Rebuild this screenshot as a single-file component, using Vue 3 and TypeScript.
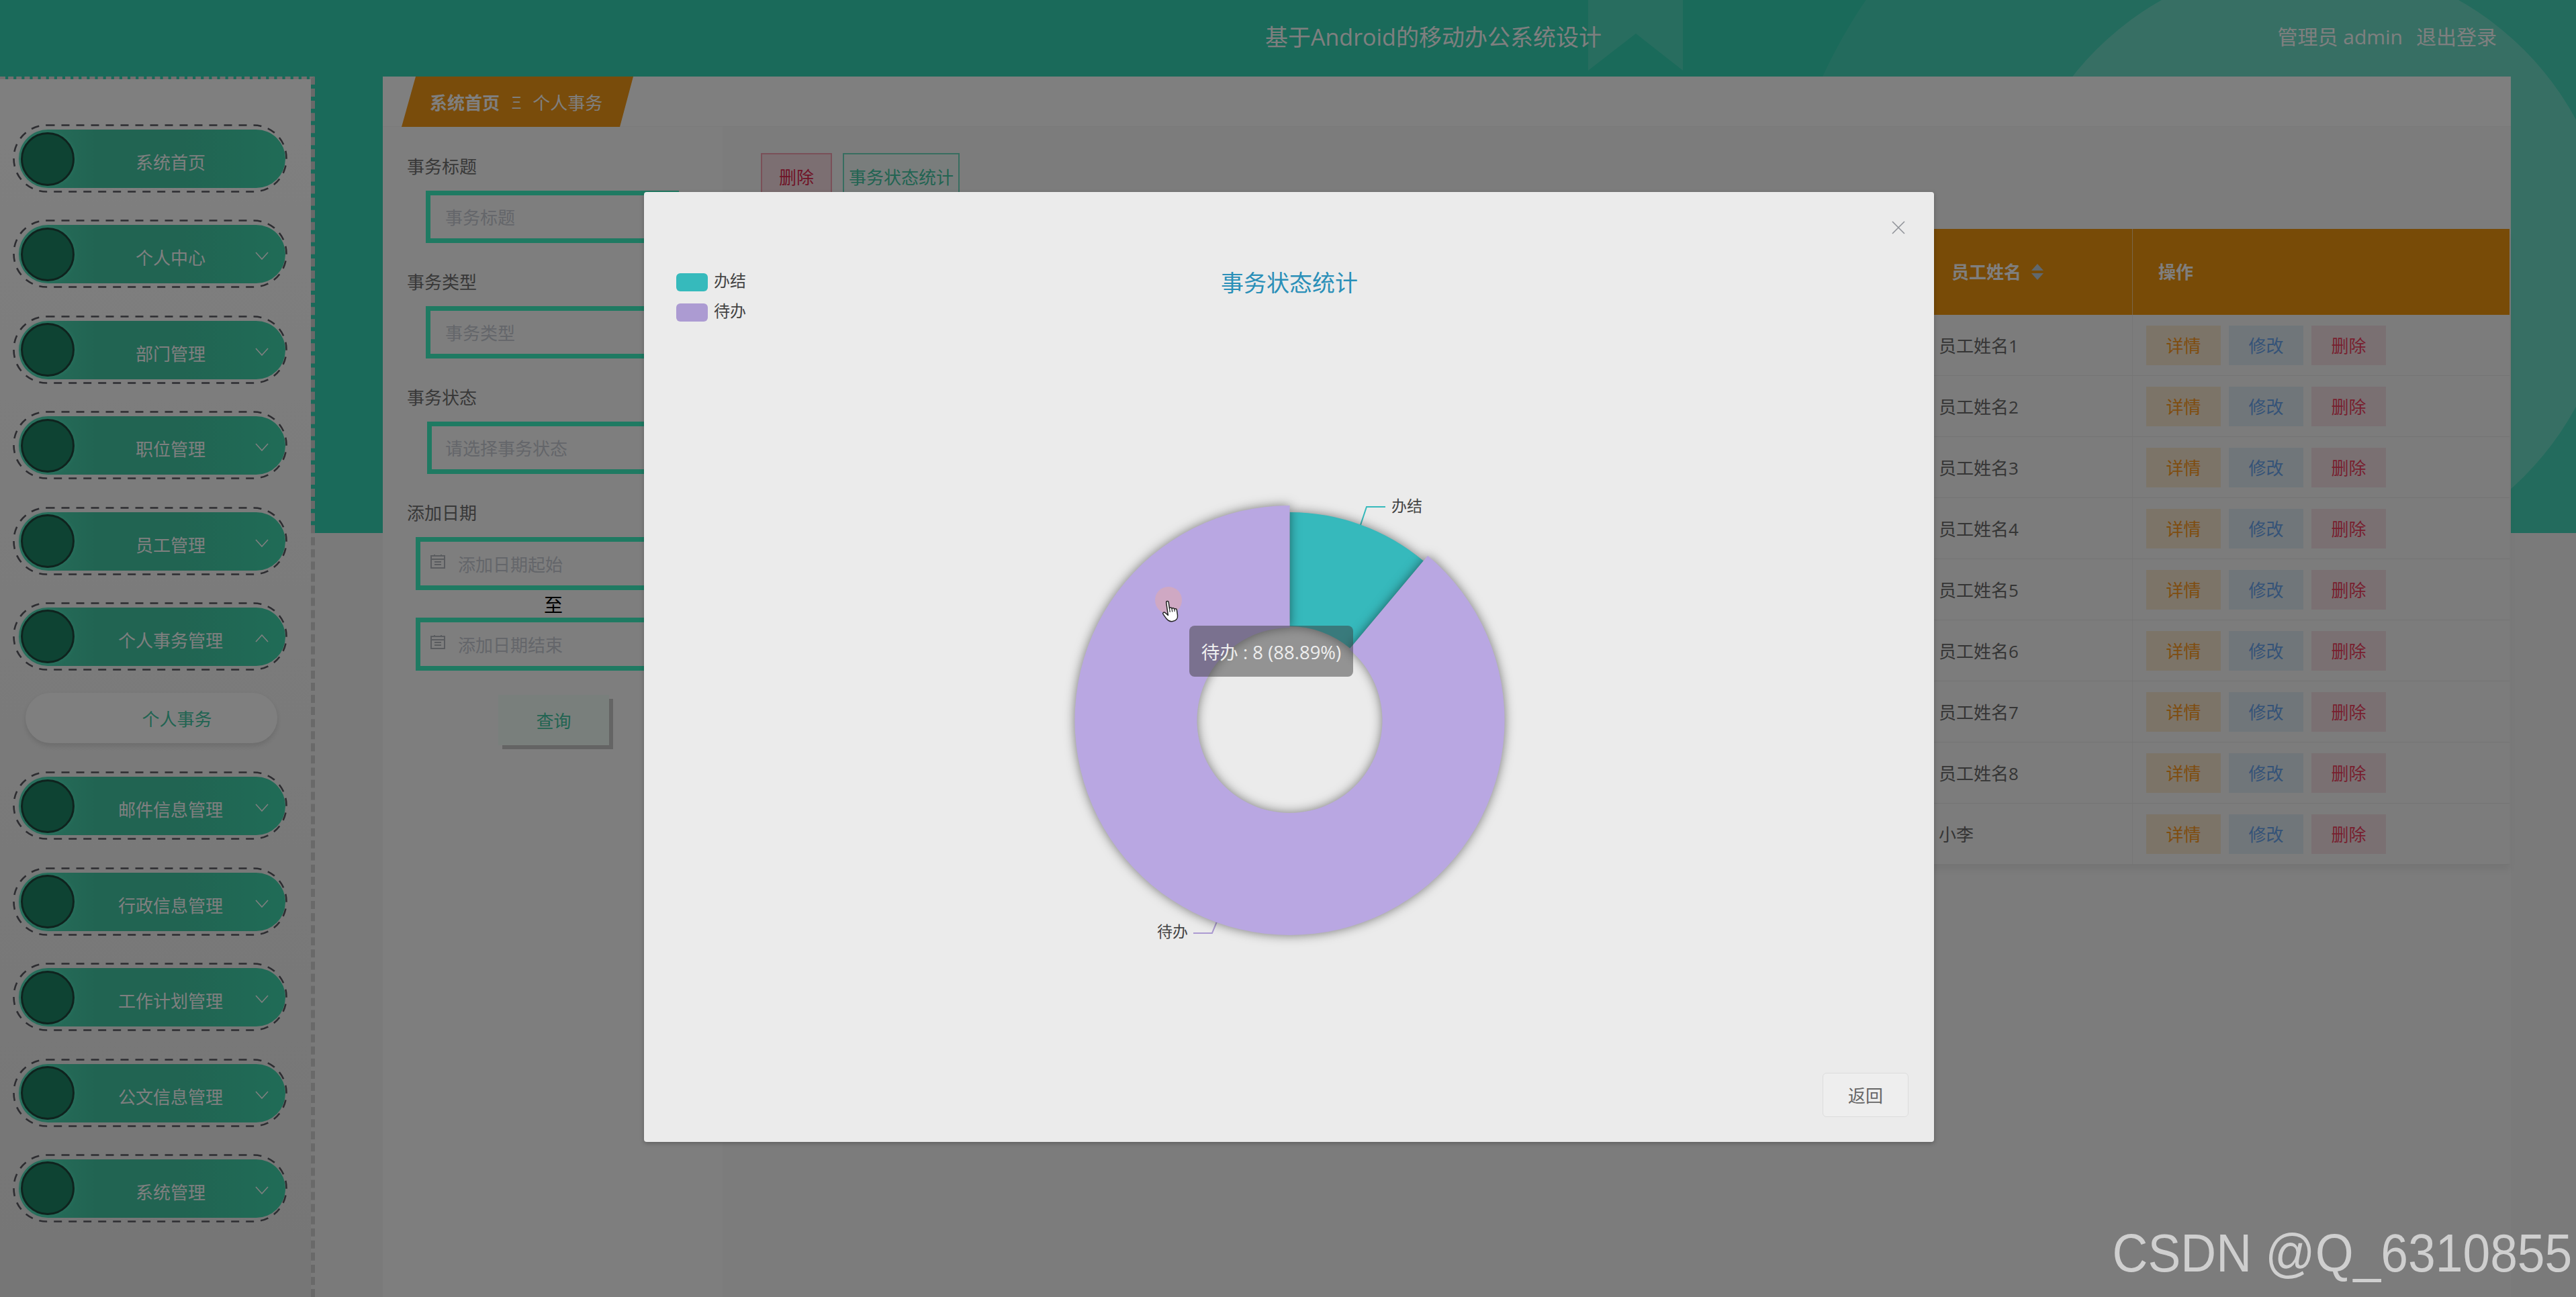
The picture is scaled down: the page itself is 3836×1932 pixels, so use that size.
<script setup lang="ts">
interface NavItem { name: string; arrow: '' | 'down' | 'up'; sub?: string }
const nav: NavItem[] = [
  { name: '系统首页', arrow: '' },
  { name: '个人中心', arrow: 'down' },
  { name: '部门管理', arrow: 'down' },
  { name: '职位管理', arrow: 'down' },
  { name: '员工管理', arrow: 'down' },
  { name: '个人事务管理', arrow: 'up', sub: '个人事务' },
  { name: '邮件信息管理', arrow: 'down' },
  { name: '行政信息管理', arrow: 'down' },
  { name: '工作计划管理', arrow: 'down' },
  { name: '公文信息管理', arrow: 'down' },
  { name: '系统管理', arrow: 'down' }
]
const rows: string[] = ['员工姓名1', '员工姓名2', '员工姓名3', '员工姓名4', '员工姓名5', '员工姓名6', '员工姓名7', '员工姓名8', '小李']

const cx = 1920.5
const cy = 1073
function pt(r: number, deg: number): string {
  const a = (deg * Math.PI) / 180
  return `${(cx + r * Math.sin(a)).toFixed(2)} ${(cy - r * Math.cos(a)).toFixed(2)}`
}
function sector(r0: number, r1: number, a0: number, a1: number): string {
  const large = a1 - a0 > 180 ? 1 : 0
  return `M${pt(r1, a0)} A${r1} ${r1} 0 ${large} 1 ${pt(r1, a1)} L${pt(r0, a1)} A${r0} ${r0} 0 ${large} 0 ${pt(r0, a0)} Z`
}
const tealPath = sector(140, 310, 0, 40)
const purplePath = sector(138, 320, 40, 360)
</script>

<template>
  <div class="page">
    <div class="band">
      <svg class="band-art" width="3836" height="794" viewBox="0 0 3836 794">
        <polygon points="2365,0 2506,0 2506,105 2436,50 2365,105" fill="rgba(255,255,255,.14)" />
        <circle cx="3440" cy="450" r="800" fill="rgba(255,255,255,.09)" />
        <circle cx="3440" cy="392" r="450" fill="rgba(255,255,255,.22)" />
      </svg>
    </div>

    <header class="top">
      <div class="title">基于Android的移动办公系统设计</div>
      <div class="user"><span>管理员 admin</span><span>退出登录</span></div>
    </header>

    <div class="body">
      <aside class="side">
        <template v-for="item in nav" :key="item.name">
          <div class="nav-item">
            <svg class="dash" width="409" height="102" viewBox="0 0 409 102">
              <rect x="1.5" y="1.5" width="406" height="99" rx="49" fill="none" stroke="#5a5a62" stroke-width="2.6" stroke-dasharray="12 10" />
            </svg>
            <div class="pill">
              <span class="dot"></span>
              <span class="nav-label">{{ item.name }}</span>
              <svg v-if="item.arrow" class="chev" width="20" height="12" viewBox="0 0 20 12">
                <polyline v-if="item.arrow === 'down'" points="1,1 10,11 19,1" fill="none" stroke="#fff" stroke-width="1.6" />
                <polyline v-else points="1,11 10,1 19,11" fill="none" stroke="#fff" stroke-width="1.6" />
              </svg>
            </div>
          </div>
          <div v-if="item.sub" class="sub-item"><span>{{ item.sub }}</span></div>
        </template>
      </aside>

      <main class="main">
        <div class="crumb-bar">
          <div class="crumb"><b>系统首页</b><i>Ξ</i><span>个人事务</span></div>
        </div>
        <div class="content">
          <section class="search">
            <label class="lab">事务标题</label>
            <div class="inp">事务标题</div>
            <label class="lab">事务类型</label>
            <div class="inp">事务类型</div>
            <label class="lab">事务状态</label>
            <div class="inp sel">请选择事务状态</div>
            <label class="lab">添加日期</label>
            <div class="inp date">
              <svg class="cal" width="24" height="22" viewBox="0 0 24 22"><path d="M2 3h20v18H2zM2 8h20M7 12h10M7 16h10M7 1v3M17 1v3" fill="none" stroke="#b5b8bf" stroke-width="2" /></svg>
              添加日期起始
            </div>
            <div class="to">至</div>
            <div class="inp date">
              <svg class="cal" width="24" height="22" viewBox="0 0 24 22"><path d="M2 3h20v18H2zM2 8h20M7 12h10M7 16h10M7 1v3M17 1v3" fill="none" stroke="#b5b8bf" stroke-width="2" /></svg>
              添加日期结束
            </div>
            <button class="query">查询</button>
          </section>
          <section class="list">
            <div class="tools">
              <button class="tool del">删除</button>
              <button class="tool stat">事务状态统计</button>
            </div>
            <div class="table">
              <div class="tr th">
                <div class="td spacer"></div>
                <div class="td name"><span class="th-t">员工姓名</span><span class="sort"><em class="up"></em><em class="dn"></em></span></div>
                <div class="td act"><span class="th-t">操作</span></div>
              </div>
              <div v-for="r in rows" :key="r" class="tr">
                <div class="td spacer"></div>
                <div class="td name">{{ r }}</div>
                <div class="td act">
                  <button class="mini m1">详情</button>
                  <button class="mini m2">修改</button>
                  <button class="mini m3">删除</button>
                </div>
              </div>
            </div>
          </section>
        </div>
      </main>
    </div>

    <div class="mask"></div>

    <div class="modal">
      <svg class="chart" width="1921" height="1312" viewBox="959 286 1921 1312">
        <text x="1920" y="434" text-anchor="middle" class="c-title">事务状态统计</text>
        <rect x="1007" y="407" width="47" height="27" rx="6" fill="#36babc" />
        <text x="1063" y="427" class="c-leg">办结</text>
        <rect x="1007" y="452" width="47" height="27" rx="6" fill="#ac9bd2" />
        <text x="1063" y="472" class="c-leg">待办</text>

        <polyline points="2026,782 2035,755 2063,755" fill="none" stroke="#36babc" stroke-width="2" />
        <text x="2072" y="762" class="c-lab">办结</text>
        <polyline points="1812,1373 1805,1390 1777,1390" fill="none" stroke="#ac9bd2" stroke-width="2" />
        <text x="1723" y="1396" class="c-lab">待办</text>

        <path :d="tealPath" fill="#36b9bc" class="slice" />
        <path :d="purplePath" fill="#b9a7e2" class="slice" />

        <circle cx="1740" cy="894" r="20" fill="rgba(226,170,170,.55)" />
        <g transform="translate(1730 894) rotate(-8 12 16)">
          <path d="M8.5 3C8.5.5 12 .5 12 3V12C13 10.5 15.5 11 15.5 13C16.5 11.8 19 12.3 19 14.3C20 13.3 22.5 14 22.5 16V24C22.5 29 19 32 14 32C9 32 7 29 5 26L1.5 19.5C.5 17.5 3 16 4.5 17.5L8.5 22Z" fill="#fff" stroke="#222" stroke-width="1.5" stroke-linejoin="round" />
          <path d="M12 12V18M15.5 13V18M19 14.3V18" fill="none" stroke="#222" stroke-width="1.2" />
        </g>
      </svg>

      <div class="tooltip">待办 : 8 (88.89%)</div>

      <svg class="close" width="20" height="20" viewBox="0 0 20 20">
        <path d="M1 1L19 19M19 1L1 19" stroke="#909399" stroke-width="1.6" fill="none" />
      </svg>

      <div class="foot"><button class="back">返回</button></div>
    </div>

    <div class="mark">CSDN @Q_6310855</div>
  </div>
</template>

<style scoped>
.page {
  position: relative;
  width: 3836px;
  height: 1932px;
  overflow: hidden;
  background: #f4f4f4;
  font-family: "Open Sans", "Noto Sans CJK SC", sans-serif;
  font-size: 26px;
  color: #707070;
}
button { font-family: inherit; font-size: 26px; padding: 0; cursor: pointer; }

.band {
  position: absolute;
  left: 0;
  top: 0;
  width: 3836px;
  height: 794px;
  background: #34d4b4;
  overflow: hidden;
}
.band-art { display: block; }

.top {
  position: relative;
  height: 114px;
  display: flex;
  align-items: center;
  justify-content: space-between;
  padding: 0 117px 8px 1884px;
  box-sizing: border-box;
  color: #fff;
}
.title { font-size: 34px; }
.user { display: flex; gap: 20px; font-size: 30px; margin-right: 1px; }

.body { position: relative; display: flex; height: 1818px; }

.side {
  width: 469px;
  box-sizing: border-box;
  padding: 67px 0 0 19px;
  background: linear-gradient(180deg, #ffffff, #ececec) padding-box;
  border-top: 4px dashed #e8dede;
  border-right: 6px dashed #d2d2d2;
  flex: none;
}
.nav-item {
  position: relative;
  width: 409px;
  height: 102px;
  margin-bottom: 40.4px;
  box-sizing: border-box;
  padding: 8px 3px 7px 9px;
}
.dash { position: absolute; left: 0; top: 0; }
.pill {
  display: flex;
  align-items: center;
  height: 87px;
  border-radius: 44px;
  background: linear-gradient(90deg, #52dfb9 0, #42c8a4 30%, #42c8a4 60%, #40d8ae 100%);
}
.dot {
  flex: none;
  width: 80px;
  height: 80px;
  box-sizing: border-box;
  margin-left: 3px;
  border: 3px solid #1e463c;
  border-radius: 50%;
  background: #1c8666;
  box-shadow: 0 0 6px #52e8c0;
}
.nav-label {
  width: 286px;
  flex: none;
  padding-top: 9px;
  text-align: center;
  color: #fff;
}
.chev { flex: none; margin-left: -17px; margin-top: 5px; }
.sub-item {
  width: 375px;
  height: 75px;
  margin: -7px 0 42px 19px;
  border-radius: 38px;
  background: #ffffff;
  box-shadow: 0 4px 8px rgba(0, 0, 0, .12);
  color: #42c8a4;
  display: flex;
  align-items: center;
  justify-content: center;
  padding-left: 76px;
  box-sizing: border-box;
}

.main {
  width: 3169px;
  margin-left: 101px;
  background: #f8f8f8;
  display: flex;
  flex-direction: column;
}
.crumb-bar {
  height: 75px;
  flex: none;
  background: #ffffff;
  border-bottom: 1px solid #f4f4f4;
  padding-left: 28px;
  box-sizing: border-box;
}
.crumb {
  width: 345px;
  height: 75px;
  box-sizing: border-box;
  padding-left: 42px;
  background: #f39816;
  clip-path: polygon(21px 0, 100% 0, 325px 100%, 0 100%);
  display: flex;
  align-items: center;
  color: #fff;
}
.crumb b { font-weight: 700; }
.crumb i { font-style: normal; font-size: 26px; margin: 0 17px 0 18px; }

.content { display: flex; flex: 1; }
.search {
  width: 506px;
  flex: none;
  box-sizing: border-box;
  padding: 41px 0 0 36px;
  background: #fdfdfd;
}
.lab {
  display: block;
  height: 36px;
  line-height: 36px;
  margin-bottom: 18px;
  color: #707070;
}
.inp {
  width: 377px;
  height: 78px;
  box-sizing: border-box;
  margin: 0 0 40px 28px;
  padding-left: 22px;
  border: 7px solid #3ef4c4;
  background: #fdfdfd;
  display: flex;
  align-items: center;
  color: #c8ccd4;
}
.sel { margin-left: 30px; padding-left: 20px; }
.date {
  width: 410px;
  margin: 0 0 0 13px;
  height: 79px;
  padding-left: 14px;
}
.cal { margin-right: 18px; flex: none; margin-top: -8px; }
.to {
  width: 410px;
  margin-left: 13px;
  height: 41px;
  line-height: 44px;
  text-align: center;
  color: #000;
  font-size: 28px;
}
.query {
  display: block;
  width: 165px;
  height: 75px;
  margin: 36px 0 0 136px;
  border: 0;
  background: #f2fff9;
  color: #42c8a4;
  box-shadow: 6px 6px 0 #c8c8c8;
}

.list { flex: 1; min-width: 0; padding: 39px 2px 0 57px; }
.tools { display: flex; gap: 16px; height: 70px; margin-bottom: 43px; }
.tool { height: 70px; background: transparent; }
.tool.del { width: 106px; border: 2px solid #f5a0b0; background: #f9dfe4; color: #e0294f; }
.tool.stat { width: 174px; border: 2px solid #6fdcc0; background: #f2fbf8; color: #42c8a4; }

.table { box-shadow: 0 8px 10px rgba(0, 0, 0, .06); background: #f8f8f8; }
.tr {
  display: grid;
  grid-template-columns: 1fr 305px 562px;
  height: 91px;
  border-bottom: 1px solid #e8e8e8;
  box-sizing: border-box;
  color: #6a6a6a;
}
.td { display: flex; align-items: center; box-sizing: border-box; }
.td.name { padding-left: 17px; }
.td.act { padding-left: 20px; gap: 12px; border-left: 1px solid #ededed; }
.th {
  height: 128px;
  background: #f0960f;
  color: #fff;
  font-weight: 700;
  border-bottom: 0;
}
.th-t { margin-top: -3px; }
.th .td.name { padding-left: 36px; }
.th .td.act { padding-left: 38px; border-left-color: #f4cc94; }
.sort { display: inline-flex; flex-direction: column; gap: 4px; margin-left: 15px; }
.sort em { display: block; width: 0; height: 0; border-left: 9px solid transparent; border-right: 9px solid transparent; }
.sort .up { border-bottom: 10px solid #c0d0dc; }
.sort .dn { border-top: 10px solid #c0d0dc; }
.mini { width: 111px; height: 59px; border: 0; }
.m1 { background: #f8e8d0; color: #ff9a1e; }
.m2 { background: #e0ecf4; color: #6aa6f0; }
.m3 { background: #f4e0e4; color: #f0405f; }

.mask {
  position: absolute;
  inset: 0;
  background: rgba(0, 0, 0, .5);
}

.modal {
  position: absolute;
  left: 959px;
  top: 286px;
  width: 1921px;
  height: 1415px;
  box-sizing: border-box;
  border-radius: 4px;
  background: #ebebeb;
  box-shadow: 0 2px 6px rgba(0, 0, 0, .25);
  overflow: hidden;
}
.chart { display: block; }
.c-title { font-size: 34px; fill: #2a8fb8; font-family: "Open Sans", "Noto Sans CJK SC", sans-serif; }
.c-leg { font-size: 24px; fill: #444; font-family: "Open Sans", "Noto Sans CJK SC", sans-serif; }
.c-lab { font-size: 23px; fill: #444; font-family: "Open Sans", "Noto Sans CJK SC", sans-serif; }
.slice { filter: drop-shadow(0 0 8px rgba(0, 0, 0, .5)); }
.tooltip {
  position: absolute;
  left: 812px;
  top: 646px;
  width: 244px;
  height: 76px;
  border-radius: 8px;
  background: rgba(60, 60, 60, .5);
  color: #eee;
  font-size: 27.5px;
  display: flex;
  align-items: center;
  justify-content: center;
}
.close { position: absolute; right: 43px; top: 43px; }
.foot { display: flex; justify-content: flex-end; padding-right: 38px; }
.back {
  width: 128px;
  height: 66px;
  border: 1px solid #dcdcdc;
  border-radius: 6px;
  background: #eeeeee;
  color: #666;
}

.mark {
  position: absolute;
  right: 6px;
  bottom: 25px;
  font-family: "Liberation Sans", sans-serif;
  font-size: 80px;
  line-height: 80px;
  color: #cfcfcf;
  white-space: nowrap;
  transform: scaleX(.915);
  transform-origin: right center;
}
</style>
